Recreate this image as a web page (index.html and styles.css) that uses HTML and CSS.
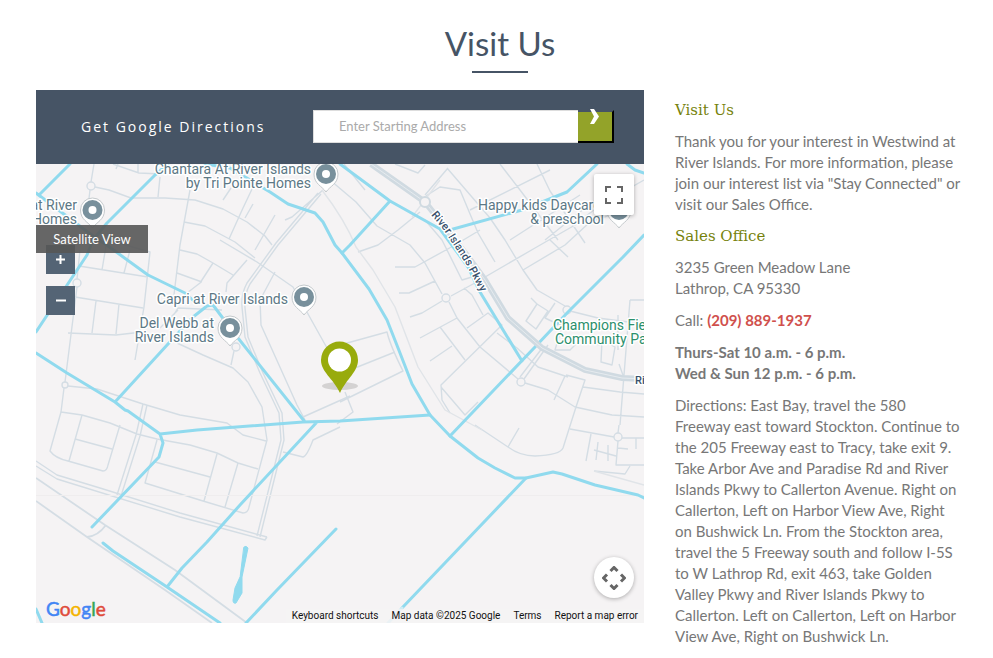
FILE: index.html
```html
<!DOCTYPE html>
<html lang="en">
<head>
<meta charset="utf-8">
<meta name="viewport" content="width=device-width, initial-scale=1">
<title>Visit Us</title>
<link rel="stylesheet" href="styles.css">
</head>
<body>
<main class="visit">
  <h1 class="visit-title">Visit Us</h1>
  <div class="visit-columns">
    <section class="map-panel" aria-label="Map and directions">
      <form class="directions">
        <label class="directions-label" for="start">Get Google Directions</label>
        <div class="directions-field">
          <input class="directions-input" id="start" type="text" placeholder="Enter Starting Address">
          <button class="directions-go" type="button" aria-label="Get directions">
            <svg width="12" height="18" viewBox="0 0 12 18"><path d="M1 1h4l5 7.500-5 7.500H1l4-7.500z" fill="#fff"/></svg>
          </button>
        </div>
      </form>
      <div class="map">
        <svg class="map-art" viewBox="36 164 608 459" preserveAspectRatio="xMidYMid slice">
          <g class="roads">
            <path d="M94 164L91 182M90 190L88 207M113 164L139 173L161 174M118 164L116 169M138 164V173M95 187L109 190L131 198L165 198L195 200L223 209L247 222L265 236L272 245M160 177L158 197M190 190L180 245L173 303M184 222L205 226L235 242L255 258M253 187L243 208L229 239M231 188L223 200M245 218L253 204"/>
            <path d="M80 250L77 279M79 266L148 277M102 270L107 240M124 273L130 250M108 240L150 252L144 307L135 360M75 297L143 308M96 301L92 333M119 304L116 334M68 333L116 335L142 332M77 287L65 382M68 386L97 389L143 404L180 415L227 423L243 435L266 441"/>
            <path d="M64 388L61 412L50 451Q55 458 68 461L103 471Q107 471 108 465L120 425M61 412L82 415L110 423L137 434L157 439L190 445L217 453L238 463L258 469M82 415L69 461M75 439L112 449M143 404L136 435L117 495M147 405L140 436L121 496M157 440L145 483L203 501L243 513Q248 513 249 507L267 440L262 407L248 382L233 368L203 355L177 343M155 462L210 477M217 454L204 501M238 463L225 507"/>
            <path d="M36 461L57 475L100 488L180 513L267 537M36 466L57 479L180 517L265 540L267 537M283 452L303 457Q307 456 313 440L340 427"/>
            <path d="M323 190L292 217L285 220M318 193L276 243L247 283Q241 294 242 307L245 337L260 373L279 413L281 440L257 536M321 194L278 245L250 284Q244 295 245 308L248 337L263 373L282 413L284 440L260 537M180 250L197 254L213 263L233 275M213 263L200 283L178 300M177 273L202 282M247 260L227 283L226 292M220 240L257 262L293 287L303 305L327 348M275 272L260 300L261 325L297 405L305 420M303 417L350 396M234 351L231 365M178 310L160 328M222 310L178 308L166 327M255 250L275 215"/>
            <path d="M340 345L387 332Q390 345 403 371L340 402M350 370L395 352M345 392L353 412L337 424"/>
            <path d="M330 180L356 202L377 226L410 245L425 263L442 294M449 302L457 318L480 347L518 379M344 164L365 190M395 267L415 267L455 245L480 230M399 293L409 293L435 281M410 317L422 313L442 301M420 338L457 318M440 327L465 360M430 361L452 346M451 296L473 284L535 248L575 225L600 205L644 180M467 328L488 313L502 325L441 385L442 400L450 413M441 387L465 415L478 402M425 220L442 240L462 280L472 277M464 288L472 295L483 315M495 262L478 233L460 190L440 187L426 196M448 168L425 195M420 212L398 230L378 245L358 252M447 168L490 218L505 240L523 270L537 290L565 306M570 311L598 318L644 324M523 270L565 245L590 222L610 215M550 240L568 257M537 164L550 191L585 243M500 164L520 190L558 240M510 240L580 195M545 240L620 180M470 210L550 170M395 164L418 173L425 165"/>
            <path d="M531 298L537 304L526 321L536 329L548 311L537 304M555 303L545 318L562 326L555 350L570 350L580 340L600 345M525 383L548 390L575 407L612 415L644 417M497 333L517 348L538 367L568 377M520 377L543 347M524 379L548 345M566 375L585 380L576 407L563 448Q560 455 535 456Q520 456 508 447L475 425M565 376L554 400M508 447L519 428M570 429L614 437M622 438H644M618 433L619 425M618 441L616 465H644M591 434L586 461M594 450L616 456M598 442L596 460M608 445V461M618 448L628 449M636 438V449M594 471L625 474L630 466M630 300L620 425M630 300H644M583 387L620 392L644 394M602 340L615 347L612 365L601 362ZM618 315V350M619 364L624 378"/>
            <circle cx="91" cy="186" r="4"/><circle cx="77" cy="283" r="4"/><circle cx="65" cy="385" r="3"/><circle cx="236" cy="347" r="4"/><circle cx="446" cy="298" r="4"/><circle cx="567" cy="310" r="4"/><circle cx="521" cy="382" r="4"/><circle cx="618" cy="437" r="4"/>
            <path class="road-faint" d="M322 190Q345 220 356 247L373 270L395 307L418 367L445 410L482 430M594 471L644 485M412 217L440 180"/>
            <path class="road-wide" d="M36 478L105 525L175 570L247 623M36 501L87 537L165 590L212 623M87 537Q98 536 106 525"/>
          </g>
          <path class="seam" d="M36 495.500H644"/>
          <g class="water">
            <path d="M70 164L39 195M36 193L93 236L108 246L148 275L185 293L195 302M168 164L155 175L107 223L93 240L87 255L36 332"/>
            <path d="M205 164L230 168L270 192L288 204L315 213L323 222L335 245L342 253L369 289L387 320L400 353L412 384L430 415L450 436L478 458L495 468L515 478L526 478L553 472L562 474L595 485L638 495L644 498"/>
            <path d="M340 164L390 201L440 229L468 267L480 292L522 361M390 201L350 245L342 253M446 231L522 210L567 192L597 164M627 164L635 170L644 173M644 235L623 257L568 312L535 347L450 436M526 478L402 608"/>
            <path d="M36 353L67 373L115 402L125 410L128 411L160 434L163 443L159 457L92 527M160 434L197 430L303 422L340 421L430 415M115 402L168 344L193 317L207 306L213 305L222 317L238 338L305 422M317 422L240 505L207 542L182 568L167 587M103 543L113 551L167 587L220 623M336 529L277 590L246 623M36 609L42 623"/>
            <path class="water-thin" d="M402 608L388 623"/>
            <path class="pond" d="M244 547Q246 545 248 548L242 577L242 593L236 603Q233 604 233 600L235 588L240 577Z"/>
          </g>
          <g class="parkway"><path d="M371 164L425 202L466 254L485 280L508 318L542 348L585 370L622 378L644 379"/><path class="parkway-line" d="M371 164L425 202L466 254L485 280L508 318L542 348L585 370L622 378L644 379"/><circle cx="425" cy="202" r="5"/></g>
          <defs>
            <g id="poi"><path d="M0 17C-4 11-12 9-12-1A12 12 0 1 1 12-1C12 9 4 11 0 17Z" fill="#fff" stroke="#c4c9cc" stroke-width="1"/><circle cy="-1" r="10" fill="#78909c"/><circle cy="-1" r="4" fill="#fff"/></g>
            <path id="pkwy" d="M431 215L443 229L466 264L486 302"/>
          </defs>
          <use href="#poi" x="326" y="175"/><use href="#poi" x="92.500" y="211"/><use href="#poi" x="304" y="298"/><use href="#poi" x="230" y="329"/><use href="#poi" x="619" y="211"/>
          <g class="place">
            <text x="311" y="174" text-anchor="end">Chantara At River Islands</text><text x="311" y="188" text-anchor="end">by Tri Pointe Homes</text>
            <text x="77" y="210" text-anchor="end">at River</text><text x="77" y="224" text-anchor="end">Homes</text>
            <text x="288" y="304" text-anchor="end">Capri at River Islands</text>
            <text x="214" y="328" text-anchor="end">Del Webb at</text><text x="214" y="342" text-anchor="end">River Islands</text>
            <text x="478" y="210">Happy kids Daycare</text><text x="604" y="224" text-anchor="end">&amp; preschool</text>
            <g class="park"><text x="553" y="330">Champions Fie</text><text x="555" y="344">Community Pa</text></g>
            <g class="street"><text><textPath href="#pkwy">River Islands Pkwy</textPath></text><text x="635" y="384">Ri</text></g>
          </g>
          <ellipse cx="340" cy="386" rx="18" ry="4" fill="#d4d2d2"/>
          <path d="M340 393C333 378 321 372 321 360A18.500 18.500 0 0 1 358 360C358 372 347 378 340 393Z" fill="#98ab0c"/><circle cx="339.500" cy="360" r="11.500" fill="#fff"/>
        </svg>
        <button class="satellite" type="button">Satellite View</button>
        <div class="zoom">
          <button class="zoom-button" type="button" aria-label="Zoom in"><svg width="11" height="11" viewBox="0 0 11 11"><path d="M5.500 1V10M1 5.500H10"/></svg></button>
          <button class="zoom-button" type="button" aria-label="Zoom out"><svg width="11" height="11" viewBox="0 0 11 11"><path d="M1 5.500H11"/></svg></button>
        </div>
        <button class="fullscreen" type="button" aria-label="Toggle fullscreen"><svg width="18" height="18" viewBox="0 0 18 18"><path d="M1 6V1H6M12 1H17V6M17 12V17H12M6 17H1V12"/></svg></button>
        <button class="camera" type="button" aria-label="Map camera controls"><svg width="24" height="24" viewBox="0 0 24 24"><path d="M8.500 5L12 1.500L15.500 5M8.500 19L12 22.500L15.500 19M5 8.500L1.500 12L5 15.500M19 8.500L22.500 12L19 15.500"/></svg></button>
        <a class="google" href="#"><span class="g-blue">G</span><span class="g-red">o</span><span class="g-yellow">o</span><span class="g-blue">g</span><span class="g-green">l</span><span class="g-red">e</span></a>
        <div class="attribution"><button class="attribution-button" type="button">Keyboard shortcuts</button><span>Map data ©2025 Google</span><a href="#">Terms</a><a href="#">Report a map error</a></div>
      </div>
    </section>
    <section class="details">
      <h2 class="details-title">Visit Us</h2>
      <p>Thank you for your interest in Westwind at River Islands. For more information, please join our interest list via "Stay Connected" or visit our Sales Office.</p>
      <h2 class="details-title">Sales Office</h2>
      <p>3235 Green Meadow Lane<br>Lathrop, CA 95330</p>
      <p>Call: <a class="phone" href="tel:2098891937">(209) 889-1937</a></p>
      <p><strong>Thurs-Sat 10 a.m. - 6 p.m.<br>Wed &amp; Sun 12 p.m. - 6 p.m.</strong></p>
      <p>Directions: East Bay, travel the 580 Freeway east toward Stockton. Continue to the 205 Freeway east to Tracy, take exit 9. Take Arbor Ave and Paradise Rd and River Islands Pkwy to Callerton Avenue. Right on Callerton, Left on Harbor View Ave, Right on Bushwick Ln. From the Stockton area, travel the 5 Freeway south and follow I-5S to W Lathrop Rd, exit 463, take Golden Valley Pkwy and River Islands Pkwy to Callerton. Left on Callerton, Left on Harbor View Ave, Right on Bushwick Ln.</p>
    </section>
  </div>
</main>
</body>
</html>
```
FILE: styles.css
```css
* { box-sizing: border-box; }
body { margin: 0; background: #fff; color: #777; font-family: Lato, "Liberation Sans", sans-serif; font-size: 15px; line-height: 21px; }
button { padding: 0; border: 0; font-family: inherit; cursor: pointer; }
a { color: inherit; text-decoration: none; }
svg { display: block; }

.visit { padding: 22px 29px 0 36px; }
.visit-title { margin: 0; color: #465465; font-size: 33px; font-weight: 400; line-height: 42px; text-align: center; }
.visit-title::after { content: ""; display: block; width: 56px; height: 2px; margin: 7px auto 17px; background: #465465; }
.visit-columns { display: grid; grid-template-columns: 608fr 289fr; gap: 31px; align-items: start; }

.directions { display: flex; align-items: center; justify-content: space-between; height: 74px; padding: 0 30px 2px 45px; background: #465465; }
.directions-label { color: #fff; font-family: "Open Sans", sans-serif; font-size: 14px; letter-spacing: 2px; }
.directions-field { display: flex; width: 301px; height: 33px; }
.directions-input { flex: 1; min-width: 0; padding: 0 25px; border: 1px solid #ddd; border-right: 0; border-radius: 0; background: #fff; font-family: inherit; font-size: 13px; color: #777; }
.directions-input::placeholder { color: #aaa; opacity: 1; }
.directions-go { display: flex; justify-content: center; width: 36px; border: 2px solid #000; border-top-color: #465465; border-left: 0; background: #93a329; }
.directions-go svg { margin-top: -4px; }

.map { position: relative; height: 459px; overflow: hidden; background: #f5f3f4; }
.map-art { width: 100%; height: 100%; }
.roads { fill: none; stroke: #d4dde4; stroke-width: 1.4; stroke-linejoin: round; }
.roads circle { fill: #f5f3f4; }
.roads .road-faint { stroke: #e0e4e8; }
.roads .road-wide { stroke-width: 1.8; }
.seam { stroke: #efedee; }
.water { fill: none; stroke: #90daee; stroke-width: 3; stroke-linejoin: round; stroke-linecap: round; }
.water .water-thin { stroke: #cfecf4; }
.water .pond { fill: #90daee; stroke-width: 1; }
.parkway { fill: none; stroke: #d0dae1; stroke-width: 6; }
.parkway .parkway-line { stroke: #e6ebef; stroke-width: 1; }
.parkway circle { fill: #f5f3f4; stroke-width: 2; }
.place { font-family: Roboto, sans-serif; font-size: 14px; fill: #5c7885; stroke: #fff; stroke-width: 3; stroke-linejoin: round; paint-order: stroke; }
.park { fill: #2c8f6c; }
.street { fill: #38506b; font-size: 11px; font-weight: 500; }

.satellite { position: absolute; z-index: 1; left: 0; top: 61px; width: 112px; height: 28px; background: rgba(86, 86, 86, .9); color: #fff; font-size: 13px; }
.zoom { position: absolute; left: 10px; top: 81px; display: grid; gap: 12px; }
.zoom-button { display: grid; place-items: center; width: 29px; height: 29px; background: #546475; }
.zoom-button svg { fill: none; stroke: #fff; stroke-width: 2; }
.fullscreen, .camera { position: absolute; right: 10px; display: grid; place-items: center; width: 40px; height: 41px; background: #fff; box-shadow: 0 1px 4px rgba(0, 0, 0, .3); }
.fullscreen { top: 10px; border-radius: 2px; }
.camera { bottom: 25px; border-radius: 50%; }
.fullscreen svg, .camera svg { fill: none; stroke: #666; stroke-width: 3; }
.fullscreen svg { stroke-width: 2; }
.google { position: absolute; left: 10px; bottom: 2px; font-family: Lato, sans-serif; font-size: 19px; font-weight: 400; line-height: 24px; -webkit-text-stroke: 0.5px; }
.g-blue { color: #4285f4; }
.g-red { color: #df4b3b; }
.g-yellow { color: #f4b400; }
.g-green { color: #34a853; }
.attribution { position: absolute; right: 0; bottom: 0; display: flex; gap: 13px; padding: 0 6px; background: rgba(245, 243, 244, .7); color: #111; font-family: Roboto, sans-serif; font-size: 10px; line-height: 14px; }
.attribution-button { background: none; color: inherit; font-size: inherit; line-height: inherit; }

.details { padding-top: 10px; }
.details-title { margin: 0 0 10px; color: #76820c; font-family: "DejaVu Serif", serif; font-size: 15px; font-weight: 400; line-height: 21px; }
.details p { margin: 0 0 11px; }
.phone { color: #d0504c; font-weight: 700; }
```
